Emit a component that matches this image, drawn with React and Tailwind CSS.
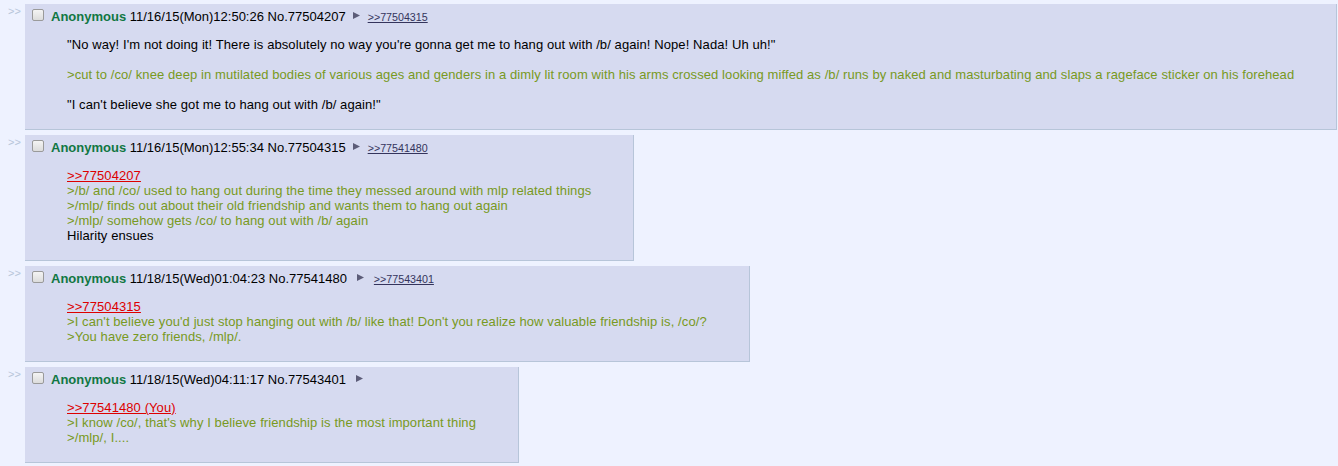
import React from "react";

const posts = [
  {
    date: "11/16/15(Mon)12:50:26",
    no: "77504207",
    backlink: ">>77504315",
    wide: false,
    lines: [
      { t: "\"No way! I'm not doing it! There is absolutely no way you're gonna get me to hang out with /b/ again! Nope! Nada! Uh uh!\"", k: "text" },
      { t: "", k: "blank" },
      { t: ">cut to /co/ knee deep in mutilated bodies of various ages and genders in a dimly lit room with his arms crossed looking miffed as /b/ runs by naked and masturbating and slaps a rageface sticker on his forehead", k: "quote" },
      { t: "", k: "blank" },
      { t: "\"I can't believe she got me to hang out with /b/ again!\"", k: "text" },
    ],
  },
  {
    date: "11/16/15(Mon)12:55:34",
    no: "77504315",
    backlink: ">>77541480",
    wide: false,
    lines: [
      { t: ">>77504207", k: "link" },
      { t: ">/b/ and /co/ used to hang out during the time they messed around with mlp related things", k: "quote" },
      { t: ">/mlp/ finds out about their old friendship and wants them to hang out again", k: "quote" },
      { t: ">/mlp/ somehow gets /co/ to hang out with /b/ again", k: "quote" },
      { t: "Hilarity ensues", k: "text" },
    ],
  },
  {
    date: "11/18/15(Wed)01:04:23",
    no: "77541480",
    backlink: ">>77543401",
    wide: true,
    lines: [
      { t: ">>77504315", k: "link" },
      { t: ">I can't believe you'd just stop hanging out with /b/ like that! Don't you realize how valuable friendship is, /co/?", k: "quote" },
      { t: ">You have zero friends, /mlp/.", k: "quote" },
    ],
  },
  {
    date: "11/18/15(Wed)04:11:17",
    no: "77543401",
    backlink: null,
    wide: true,
    lines: [
      { t: ">>77541480 (You)", k: "link" },
      { t: ">I know /co/, that's why I believe friendship is the most important thing", k: "quote" },
      { t: ">/mlp/, I....", k: "quote" },
    ],
  },
];

function Arrow({ wide }) {
  return (
    <svg
      width="7"
      height="7"
      viewBox="0 0 7 7"
      className={
        "inline-block align-[2px] " + (wide ? "ml-[10px] mr-[10px]" : "ml-[7px] mr-[8px]")
      }
    >
      <polygon points="0,0 7,3.5 0,7" fill="#5c5c78" />
    </svg>
  );
}

function Line({ line }) {
  if (line.k === "blank") return <div className="h-[15px]" />;
  if (line.k === "link")
    return (
      <div>
        <a className="text-[#dd0000] underline">{line.t}</a>
      </div>
    );
  if (line.k === "quote") return <div className="text-[#789922]">{line.t}</div>;
  return <div className="text-black">{line.t}</div>;
}

function Post({ p }) {
  return (
    <div className="flex items-start">
      <div className="w-[17px] pt-[1px] text-[11px] leading-[13px] text-[#b7c5d9]">&gt;&gt;</div>
      <div className="w-fit bg-[#d6daf0] border-r border-b border-[#b7c5d9] p-[2px]">
        <div className="flex items-start pt-[3px] h-[18px] leading-[15px] whitespace-nowrap">
          <span className="ml-[5px] mr-[7px] w-[12px] h-[12px] rounded-[2px] border border-[#9a9a9a] bg-gradient-to-b from-[#f4f4f4] to-[#dcdcdc] shrink-0" />
          <span>
            <span className="font-bold text-[#117743]">Anonymous</span>{" "}
            <span className="text-black">{p.date}</span>{" "}
            <span className="text-black">No.{p.no}</span>
            <Arrow wide={p.wide} />
            {p.backlink && (
              <a className="text-[10.7px] text-[#34345c] underline">{p.backlink}</a>
            )}
          </span>
        </div>
        <div className="mt-[13px] mb-[15px] mx-[40px] leading-[15px] tracking-[0.09px] whitespace-nowrap">
          {p.lines.map((l, i) => (
            <Line key={i} line={l} />
          ))}
        </div>
      </div>
    </div>
  );
}

export default function App() {
  return (
    <div
      className="min-h-screen bg-[#eef2ff] pl-[8px] pt-[4px] flex flex-col gap-[5px] text-[13px] text-black"
      style={{ fontFamily: '"Liberation Sans", Arial, sans-serif' }}
    >
      {posts.map((p) => (
        <Post key={p.no} p={p} />
      ))}
    </div>
  );
}
